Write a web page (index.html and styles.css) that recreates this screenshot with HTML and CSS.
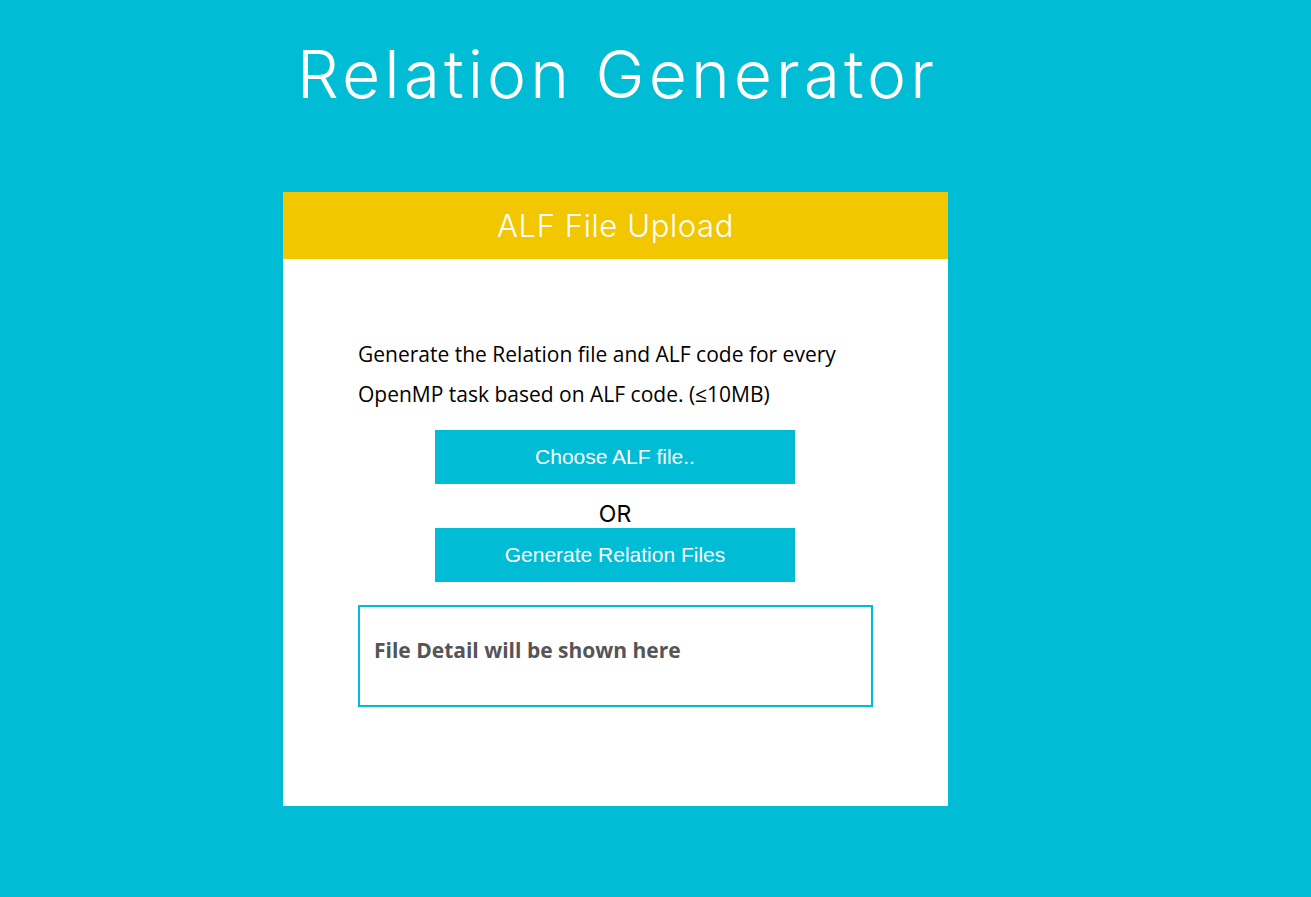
FILE: index.html
```html
<!DOCTYPE html>
<html>
<head>
<meta charset="utf-8">
<link rel="stylesheet" href="styles.css">
</head>
<body>
<div class="page">
  <h1 class="title">Relation Generator</h1>
  <div class="card">
    <div class="card-header">ALF File Upload</div>
    <div class="card-body">
      <p class="desc">Generate the Relation file and ALF code for every OpenMP task based on ALF code. (≤10MB)</p>
      <div class="actions">
        <button class="btn">Choose ALF file..</button>
        <div class="or">OR</div>
        <button class="btn">Generate Relation Files</button>
      </div>
      <div class="detail">File Detail will be shown here</div>
    </div>
  </div>
</div>
</body>
</html>
```

FILE: styles.css
```css
html, body {
  margin: 0;
  padding: 0;
  background: #00bcd4;
  height: 100%;
}
.page {
  width: 665px;
  margin-left: 283px;
  padding-top: 32px;
}
.title {
  margin: 0;
  font-family: Inter, "Open Sans", sans-serif;
  font-weight: 300;
  font-size: 66px;
  letter-spacing: 4px;
  text-indent: 4px;
  line-height: 84px;
  color: #fff;
  text-align: center;
}
.card {
  margin-top: 76px;
  background: #fff;
  height: 614px;
}
.card-header {
  background: #f3c700;
  height: 67px;
  display: flex;
  align-items: center;
  justify-content: center;
  color: #fff;
  font-family: Inter, sans-serif;
  font-weight: 300;
  font-size: 31px;
  letter-spacing: 0.6px;
}
.card-body {
  padding: 75px 75px 0 75px;
}
.desc {
  margin: 0;
  font-family: "Open Sans", sans-serif;
  font-size: 21px;
  line-height: 40px;
  color: #000;
}
.actions {
  display: flex;
  flex-direction: column;
  align-items: center;
  margin-top: 16px;
  padding-right: 1px;
}
.btn {
  width: 360px;
  height: 54px;
  border: none;
  background: #00bcd4;
  color: #fff;
  font-family: "Liberation Sans", Arial, sans-serif;
  font-size: 21px;
  padding: 0;
}
.or {
  font-family: Inter, sans-serif;
  font-size: 23px;
  height: 44px;
  padding-top: 16px;
  box-sizing: border-box;
  line-height: 28px;
  color: #000;
}
.detail {
  margin-top: 23px;
  border: 2px solid #00bcd4;
  box-sizing: border-box;
  height: 102px;
  padding: 29px 14px 0 14px;
  font-family: "Open Sans", sans-serif;
  font-weight: 700;
  font-size: 21px;
  color: #555;
}
```
